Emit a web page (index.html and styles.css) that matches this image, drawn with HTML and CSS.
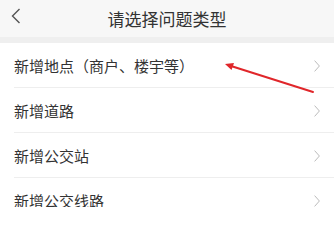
FILE: index.html
```html
<!DOCTYPE html>
<html lang="zh-CN">
<head>
<meta charset="utf-8">
<link rel="stylesheet" href="styles.css">
</head>
<body>
<div class="page">
  <header class="topbar">
    <span class="back">
      <svg width="10" height="16" viewBox="0 0 10 16"><polyline points="8.5,1 1.5,8 8.5,15" fill="none" stroke="#555" stroke-width="1.4"/></svg>
    </span>
    <h1 class="title">请选择问题类型</h1>
  </header>
  <div class="band"></div>
  <ul class="list">
    <li class="row"><span class="label">新增地点（商户、楼宇等）</span><span class="chev"><svg width="6" height="12" viewBox="0 0 6 12"><polyline points="0.6,0.6 5.4,6 0.6,11.4" fill="none" stroke="#bbb" stroke-width="1"/></svg></span></li>
    <li class="row"><span class="label">新增道路</span><span class="chev"><svg width="6" height="12" viewBox="0 0 6 12"><polyline points="0.6,0.6 5.4,6 0.6,11.4" fill="none" stroke="#bbb" stroke-width="1"/></svg></span></li>
    <li class="row"><span class="label">新增公交站</span><span class="chev"><svg width="6" height="12" viewBox="0 0 6 12"><polyline points="0.6,0.6 5.4,6 0.6,11.4" fill="none" stroke="#bbb" stroke-width="1"/></svg></span></li>
    <li class="row"><span class="label">新增公交线路</span><span class="chev"><svg width="6" height="12" viewBox="0 0 6 12"><polyline points="0.6,0.6 5.4,6 0.6,11.4" fill="none" stroke="#bbb" stroke-width="1"/></svg></span></li>
  </ul>
  <svg class="annot" width="334" height="207" viewBox="0 0 334 207">
    <line x1="313" y1="92" x2="231" y2="66" stroke="#e0262a" stroke-width="2" stroke-linecap="round"/>
    <polygon points="225,64 234,63 231.5,70" fill="#e0262a"/>
  </svg>
</div>
</body>
</html>
```
FILE: styles.css
```css
* { box-sizing: border-box; }
html, body { margin: 0; padding: 0; }
body {
  width: 334px;
  height: 207px;
  overflow: hidden;
  background: #ffffff;
  font-family: "Noto Sans CJK SC", "Noto Sans", sans-serif;
  color: #333333;
}
.page { position: relative; width: 334px; height: 207px; }
.topbar {
  height: 37px;
  background: #f7f7f7;
  display: flex;
  align-items: center;
  justify-content: center;
  position: relative;
}
.back {
  position: absolute;
  left: 11px;
  top: 8px;
  display: flex;
}
.title {
  margin: 0;
  font-size: 17px;
  font-weight: normal;
  color: #333;
  line-height: 1;
  margin-top: 0px;
}
.band { height: 6px; background: #efefef; }
.list { list-style: none; margin: 0; padding: 0 0 0 14px; }
.row {
  height: 45px;
  display: flex;
  align-items: center;
  justify-content: space-between;
  border-bottom: 1px solid #eeeeee;
  padding-right: 14px;
  padding-top: 1px;
}
.label { font-size: 15px; line-height: 1; color: #333; }
.chev { display: flex; }
.annot { position: absolute; left: 0; top: 0; pointer-events: none; }
```
